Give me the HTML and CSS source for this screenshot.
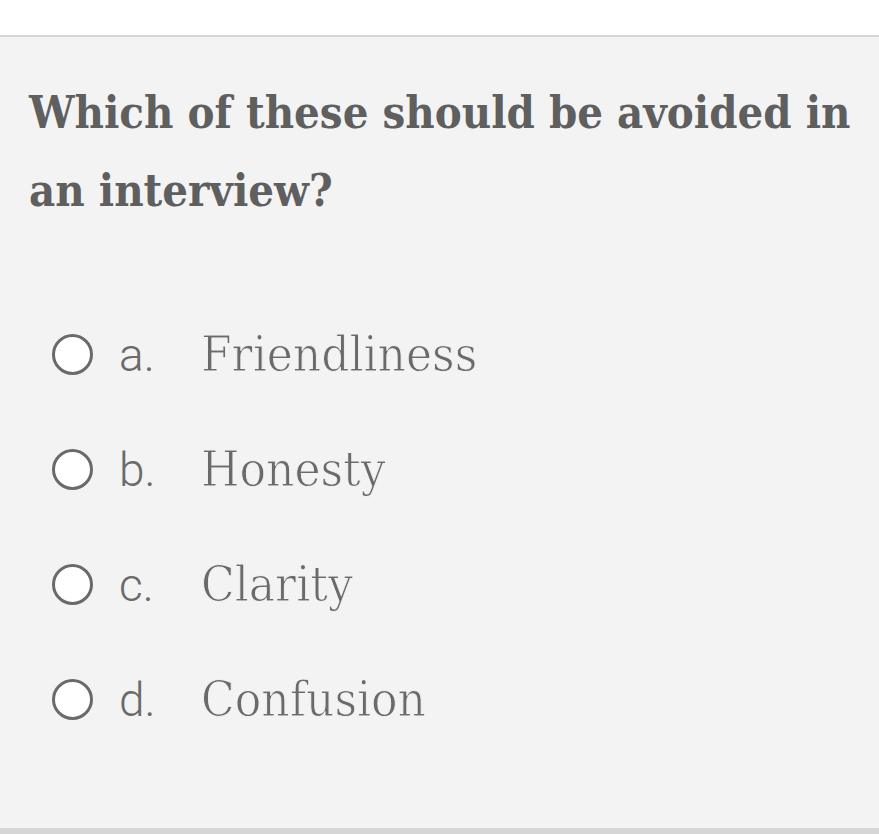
FILE: index.html
```html
<!DOCTYPE html>
<html lang="en">
<head>
<meta charset="utf-8">
<title>Quiz question</title>
<link rel="stylesheet" href="styles.css">
</head>
<body>
<div class="topbar"></div>
<section class="card">
  <h1 class="question">Which of these should be avoided in an interview?</h1>
  <ul class="options">
    <li class="option"><span class="radio"></span><span class="letter">a.</span><span class="answer">Friendliness</span></li>
    <li class="option"><span class="radio"></span><span class="letter">b.</span><span class="answer">Honesty</span></li>
    <li class="option"><span class="radio"></span><span class="letter">c.</span><span class="answer">Clarity</span></li>
    <li class="option"><span class="radio"></span><span class="letter">d.</span><span class="answer">Confusion</span></li>
  </ul>
</section>
</body>
</html>
```

FILE: styles.css
```css
html, body {
  margin: 0;
  padding: 0;
  background: #d6d6d6;
  height: 100%;
}
body {
  display: flex;
  flex-direction: column;
}
.topbar {
  height: 35px;
  background: #ffffff;
  border-bottom: 2px solid #d6d6d6;
  flex: none;
}
.card {
  background: #f3f3f3;
  height: 791px;
  box-sizing: border-box;
  padding: 37px 12px 0 29px;
  flex: none;
}
.question {
  margin: 0;
  font-family: "DejaVu Serif", serif;
  font-stretch: condensed;
  font-weight: bold;
  font-size: 45px;
  line-height: 78px;
  color: #5f5f5f;
}
.options {
  list-style: none;
  margin: 0;
  padding: 0 0 0 23px;
  margin-top: 104px;
  display: flex;
  flex-direction: column;
  gap: 74px;
}
.option {
  display: flex;
  align-items: center;
  height: 41px;
}
.radio {
  width: 35px;
  height: 35px;
  border: 3px solid #6a6a6a;
  border-radius: 50%;
  background: #ffffff;
  flex: none;
}
.letter {
  font-family: "Roboto", sans-serif;
  font-weight: 300;
  font-size: 46px;
  color: #6a6a6a;
  width: 82px;
  margin-left: 26px;
  flex: none;
}
.answer {
  font-family: "DejaVu Serif", serif;
  font-stretch: condensed;
  font-size: 49px;
  color: #6a6a6a;
  -webkit-text-stroke: 0.9px #f3f3f3;
}
```
